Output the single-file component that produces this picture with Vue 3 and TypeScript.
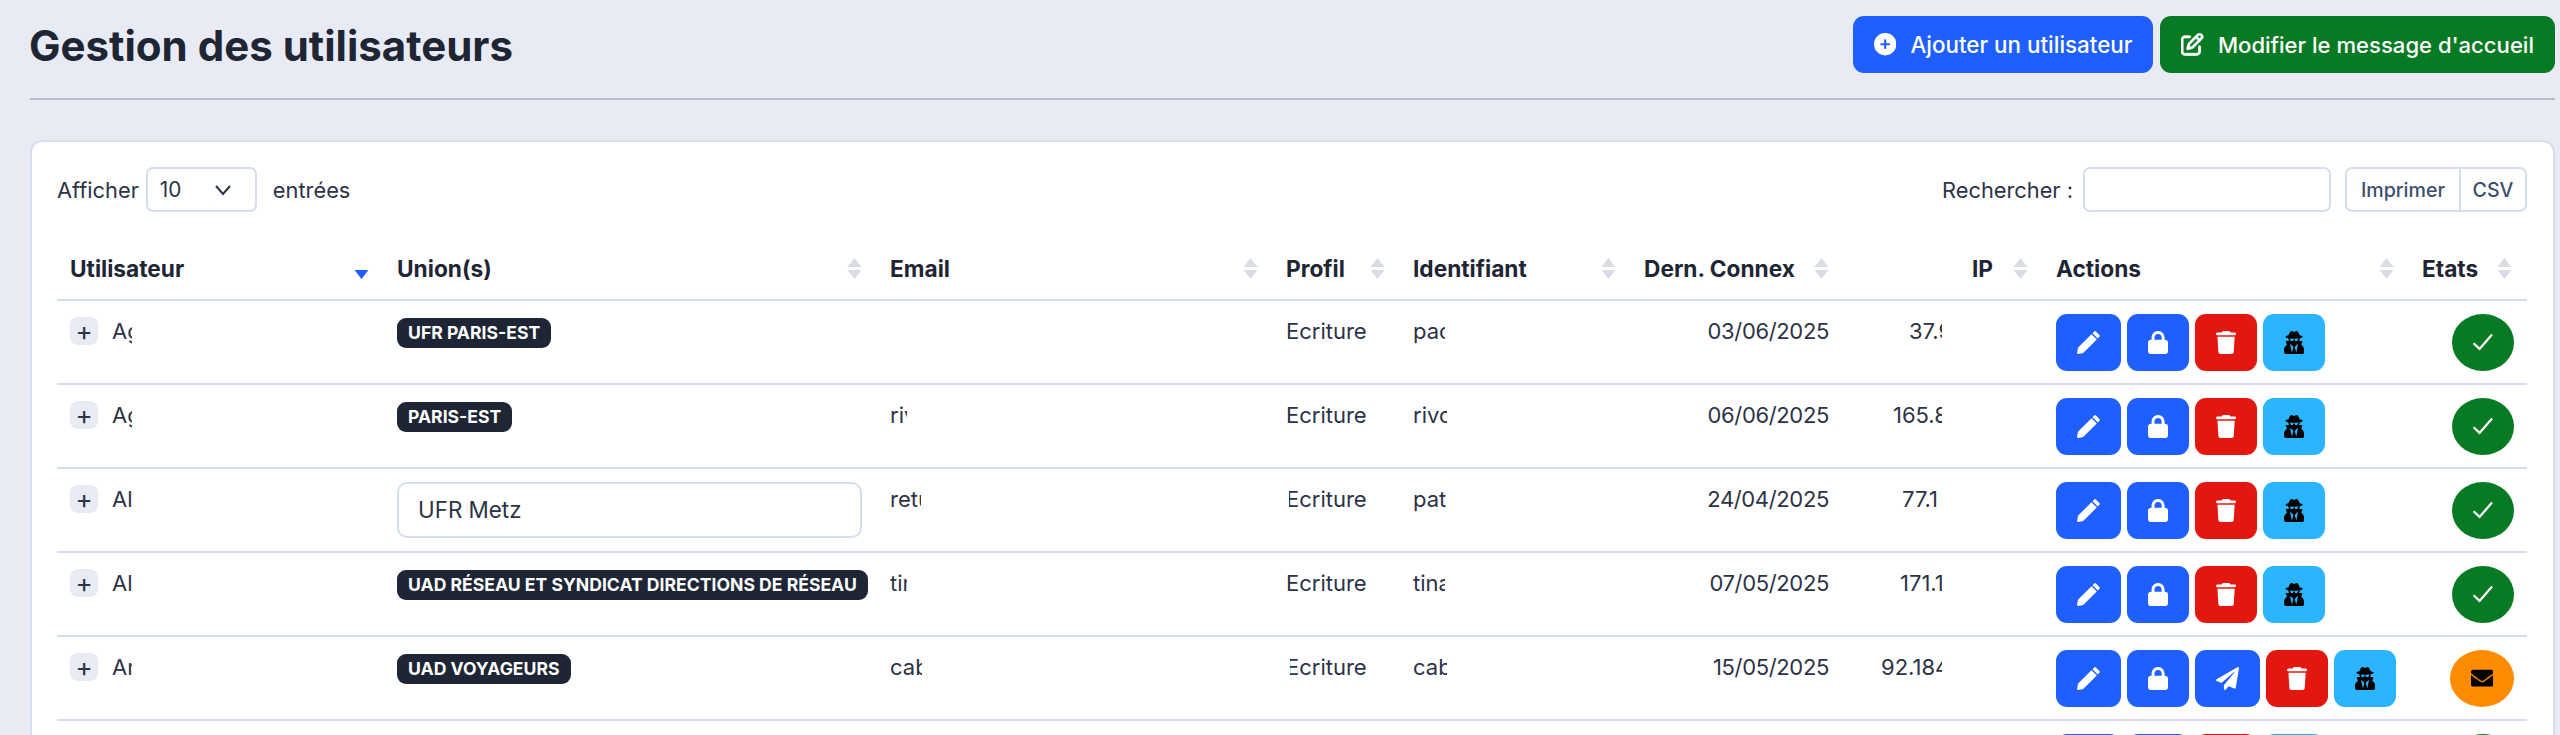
<script setup lang="ts">
interface Row {
  name: string
  union: string
  unionInput?: boolean
  email: string
  emailW: number
  trim?: number
  login: string
  loginW: number
  date: string
  ip: string
  ipW: number
  pending?: boolean
}

const columns = [
  { label: 'Utilisateur', width: 327, active: true },
  { label: 'Union(s)', width: 493 },
  { label: 'Email', width: 396 },
  { label: 'Profil', width: 127 },
  { label: 'Identifiant', width: 231 },
  { label: 'Dern. Connex', width: 213 },
  { label: 'IP', width: 199, end: true },
  { label: 'Actions', width: 366 },
  { label: 'Etats', width: 118 },
]

const rows: Row[] = [
  { name: 'Ag', union: 'UFR PARIS-EST', email: '', emailW: 0, login: 'pac', loginW: 32, date: '03/06/2025', ip: '37.9', ipW: 33 },
  { name: 'Ag', union: 'PARIS-EST', email: 'riv', emailW: 17, login: 'rivc', loginW: 34, date: '06/06/2025', ip: '165.8', ipW: 49 },
  { name: 'Al', union: 'UFR Metz', unionInput: true, email: 'retu', emailW: 31, trim: 3, login: 'pate', loginW: 33, date: '24/04/2025', ip: '77.1', ipW: 40 },
  { name: 'Al', union: 'UAD RÉSEAU ET SYNDICAT DIRECTIONS DE RÉSEAU', email: 'tin', emailW: 17, login: 'tina', loginW: 32, date: '07/05/2025', ip: '171.1', ipW: 42 },
  { name: 'An', union: 'UAD VOYAGEURS', email: 'cab', emailW: 32, trim: 4, login: 'cab', loginW: 34, date: '15/05/2025', ip: '92.184', ipW: 61, pending: true },
  { name: 'An', union: 'UAD VOYAGEURS', email: 'cab', emailW: 32, login: 'cab', loginW: 34, date: '12/05/2025', ip: '92.184', ipW: 61 },
]

const icons: Record<string, { box: string; d: string }> = {
  pencil: { box: '0 0 512 512', d: 'M427 18l67 67c14 14 14 36 0 50l-31 31-117-117 31-31c14-14 36-14 50 0zM323 72l117 117-286 286c-9 9-20 15-32 18l-99 18c-13 2-24-9-22-22l18-99c3-12 9-23 18-32z' },
  lock: { box: '0 0 448 512', d: 'M144 144v48H304V144c0-44.2-35.8-80-80-80s-80 35.8-80 80zM80 192V144C80 64.5 144.5 0 224 0s144 64.5 144 144v48h16c35.3 0 64 28.7 64 64V448c0 35.3-28.7 64-64 64H64c-35.3 0-64-28.7-64-64V256c0-35.3 28.7-64 64-64H80z' },
  plane: { box: '0 0 512 512', d: 'M476 3.2L12.5 270.6c-18.1 10.4-15.8 35.6 2.2 43.2L121 358.4l287.3-253.2c5.5-4.9 13.3 2.6 8.6 8.3L176 407v80.5c0 23.6 28.5 32.9 42.5 15.8L282 426l124.6 52.2c14.2 6 30.4-2.9 33-18.2l72-432C515 7.8 493.3-6.8 476 3.2z' },
  trash: { box: '0 0 448 512', d: 'M135.2 17.7L128 32H32C14.3 32 0 46.3 0 64S14.3 96 32 96H416c17.7 0 32-14.3 32-32s-14.3-32-32-32H320l-7.2-14.3C307.4 6.8 296.3 0 284.2 0H163.8c-12.1 0-23.2 6.8-28.6 17.7zM416 128H32L53.2 467c1.6 25.3 22.6 45 47.9 45H346.9c25.3 0 46.3-19.7 47.9-45L416 128z' },
  secret: { box: '0 0 448 512', d: 'M383.9 308.3l23.9-62.6c4-10.5-3.7-21.7-15-21.7h-58.5c11-18.9 17.8-40.6 17.8-64v-.3c39.2-7.8 64-19.1 64-31.7 0-13.3-27.3-25.1-70.1-33-9.2-32.8-27-65.8-40.6-82.8-9.5-11.9-25.9-15.6-39.5-8.8l-27.6 13.8c-9 4.5-19.6 4.5-28.6 0L182.1 3.4c-13.6-6.8-30-3.1-39.5 8.8-13.5 17-31.4 50-40.6 82.8-42.7 7.9-70 19.7-70 33 0 12.6 24.8 23.9 64 31.7v.3c0 23.4 6.8 45.1 17.8 64H56.3c-11.5 0-19.2 11.7-14.7 22.3l25.8 60.2C27.3 329.8 0 372.7 0 422.4v44.8C0 491.9 20.1 512 44.8 512h358.4c24.7 0 44.8-20.1 44.8-44.8v-44.8c0-48.4-25.8-90.4-64.1-114.1zM176 480l-41.6-192 49.6 32 24 40-32 120zm96 0l-32-120 24-40 49.6-32L272 480zm41.7-298.5c-3.9 11.9-7 24.6-16.5 33.4-10.1 9.3-48 22.4-64-25-2.8-8.4-15.4-8.4-18.3 0-17 50.2-56 32.4-64 25-9.5-8.8-12.7-21.5-16.5-33.4-.8-2.5-6.3-5.7-6.3-5.8v-10.8c28.3 3.6 61 5.8 96 5.8s67.7-2.1 96-5.8v10.8c-.1.1-5.6 3.2-6.4 5.8z' },
  envelope: { box: '0 0 512 512', d: 'M502.3 190.8c3.9-3.1 9.7-.2 9.7 4.7V400c0 26.5-21.5 48-48 48H48c-26.5 0-48-21.5-48-48V195.6c0-5 5.7-7.8 9.7-4.7 22.4 17.4 52.1 39.5 154.1 113.6 21.1 15.4 56.7 47.8 92.2 47.6 35.7.3 72-32.8 92.3-47.6 102-74.1 131.6-96.3 154-113.7zM256 320c23.2.4 56.6-29.2 73.4-41.4 132.7-96.3 142.8-104.7 173.4-128.7 5.8-4.5 9.2-11.5 9.2-18.9v-19c0-26.5-21.5-48-48-48H48C21.5 64 0 85.5 0 112v19c0 7.4 3.4 14.3 9.2 18.9 30.6 23.9 40.7 32.4 173.4 128.7 16.8 12.2 50.2 41.8 73.4 41.4z' },
  plus: { box: '0 0 512 512', d: 'M256 512A256 256 0 1 0 256 0a256 256 0 1 0 0 512zM232 344V280H168c-13.3 0-24-10.7-24-24s10.7-24 24-24h64V168c0-13.3 10.7-24 24-24s24 10.7 24 24v64h64c13.3 0 24 10.7 24 24s-10.7 24-24 24H280v64c0 13.3-10.7 24-24 24s-24-10.7-24-24z' },
  edit: { box: '0 0 512 512', d: 'M441 58.9L453.1 71c9.4 9.4 9.4 24.6 0 33.9L424 134.1 377.9 88 407 58.9c9.4-9.4 24.6-9.4 33.9 0zM209.8 256.2L344 121.9 390.1 168 255.8 302.2c-2.9 2.9-6.5 5-10.4 6.1l-58.5 16.7 16.7-58.5c1.1-3.9 3.2-7.5 6.1-10.4zM373.1 25L175.8 222.2c-8.7 8.7-15 19.4-18.3 31.1l-28.6 100c-2.4 8.4-.1 17.4 6.1 23.6s15.2 8.5 23.6 6.1l100-28.6c11.8-3.4 22.5-9.7 31.1-18.3L487 138.9c28.1-28.1 28.1-73.7 0-101.8L474.9 25C446.8-3.1 401.2-3.1 373.1 25zM88 64C39.4 64 0 103.4 0 152V424c0 48.6 39.4 88 88 88H360c48.6 0 88-39.4 88-88V312c0-13.3-10.7-24-24-24s-24 10.7-24 24V424c0 22.1-17.9 40-40 40H88c-22.1 0-40-17.9-40-40V152c0-22.1 17.9-40 40-40H200c13.3 0 24-10.7 24-24s-10.7-24-24-24H88z' },
}

function actionsFor(row: Row) {
  const list = [
    { icon: 'pencil', tone: 'blue' },
    { icon: 'lock', tone: 'blue' },
  ]
  if (row.pending) list.push({ icon: 'plane', tone: 'blue' })
  list.push({ icon: 'trash', tone: 'red' }, { icon: 'secret', tone: 'cyan' })
  return list
}

function trimStyle(row: Row) {
  return row.trim ? { marginLeft: row.trim + 'px', textIndent: -row.trim + 'px' } : {}
}
</script>

<template>
  <div class="page">
    <header class="top">
      <h1>Gestion des utilisateurs</h1>
      <div class="top-actions">
        <button class="cta blue">
          <svg class="cta-icon" :viewBox="icons.plus.box"><path :d="icons.plus.d" /></svg>
          Ajouter un utilisateur
        </button>
        <button class="cta green">
          <svg class="cta-icon bold" :viewBox="icons.edit.box"><path :d="icons.edit.d" /></svg>
          Modifier le message d'accueil
        </button>
      </div>
    </header>

    <section class="card">
      <div class="toolbar">
        <div class="length">
          <span>Afficher</span>
          <div class="select">
            <span>10</span>
            <svg width="18" height="12" viewBox="0 0 18 12"><polyline points="2,2 9,10 16,2" /></svg>
          </div>
          <span class="after">entrées</span>
        </div>
        <div class="tools">
          <span>Rechercher :</span>
          <input class="search" type="text" />
          <div class="export">
            <button class="print">Imprimer</button>
            <button class="csv">CSV</button>
          </div>
        </div>
      </div>

      <table>
        <colgroup>
          <col v-for="c in columns" :key="c.label" :style="{ width: c.width + 'px' }" />
        </colgroup>
        <thead>
          <tr>
            <th v-for="c in columns" :key="c.label">
              <div class="th-in" :class="{ end: c.end }">
                <span>{{ c.label }}</span>
                <svg class="sort" width="15" height="21" viewBox="0 0 15 21">
                  <path v-if="!c.active" d="M7.5 0 L14.5 9 H0.5 Z" fill="#d9dce5" />
                  <path d="M0.5 12 H14.5 L7.5 21 Z" :fill="c.active ? '#1f5fff' : '#d9dce5'" />
                </svg>
              </div>
            </th>
          </tr>
        </thead>
        <tbody>
          <tr v-for="(row, i) in rows" :key="i">
            <td>
              <div class="user">
                <span class="expand">+</span>
                <span class="clip" style="width: 20px">{{ row.name }}</span>
              </div>
            </td>
            <td>
              <div v-if="row.unionInput" class="union-field">{{ row.union }}</div>
              <span v-else class="badge">{{ row.union }}</span>
            </td>
            <td><span class="clip" :style="{ width: row.emailW + 'px' }">{{ row.email }}</span></td>
            <td><span class="clip" :style="trimStyle(row)">Ecriture</span></td>
            <td><span class="clip" :style="{ width: row.loginW + 'px' }">{{ row.login }}</span></td>
            <td class="date">{{ row.date }}</td>
            <td class="ip"><span class="clip" :style="{ width: row.ipW + 'px' }">{{ row.ip }}</span></td>
            <td class="act">
              <div class="actions">
                <button v-for="a in actionsFor(row)" :key="a.icon" class="act-btn" :class="a.tone">
                  <svg :viewBox="icons[a.icon].box"><path :d="icons[a.icon].d" /></svg>
                </button>
              </div>
            </td>
            <td class="act state">
              <span v-if="row.pending" class="pill orange">
                <svg :viewBox="icons.envelope.box"><path :d="icons.envelope.d" /></svg>
              </span>
              <span v-else class="pill green">
                <svg class="check" viewBox="0 0 448 512"><polyline points="12,280 150,410 436,80" /></svg>
              </span>
            </td>
          </tr>
        </tbody>
      </table>
    </section>
  </div>
</template>

<style>
html, body {
  margin: 0;
  overflow: hidden;
  background: #e8ebf3;
}
</style>

<style scoped>
.page {
  height: 735px;
  overflow: hidden;
  padding: 0 5px 0 30px;
  box-sizing: border-box;
  font-family: Inter, "Liberation Sans", sans-serif;
  color: #2c3346;
  font-size: 22px;
}
.top {
  display: flex;
  justify-content: space-between;
  align-items: center;
  padding: 16px 0 25px;
  border-bottom: 2px solid #b9bdc9;
  margin-bottom: 40px;
}
h1 {
  margin: 2px 0 0 -1px;
  font-size: 42px;
  font-weight: 700;
  color: #1e2534;
  line-height: 55px;
}
.top-actions {
  display: flex;
  gap: 7px;
}
.cta {
  height: 57px;
  display: flex;
  align-items: center;
  gap: 14px;
  padding: 0 21px;
  border: 0;
  border-radius: 11px;
  color: #fff;
  font: 500 22.4px Inter, "Liberation Sans", sans-serif;
}
.cta.green { font-size: 22.1px; }
.cta-icon {
  width: 22.4px;
  height: 22.4px;
  fill: #fff;
}
.cta-icon.bold {
  stroke: #fff;
  stroke-width: 18;
}
.blue { background: #1f5fff; }
.green { background: #087a23; }
.red { background: #e3170f; }
.cyan { background: #2cb5ff; }
.orange { background: #ff8c00; }

.card {
  background: #fff;
  border: 2px solid #d5deec;
  border-radius: 12px;
  padding: 25px 26px 0 25px;
}
.toolbar {
  display: flex;
  justify-content: space-between;
  align-items: center;
  height: 45px;
  margin-bottom: 26px;
  font-size: 21.8px;
}
.length, .tools {
  display: flex;
  align-items: center;
}
.select {
  width: 111px;
  height: 45px;
  margin-left: 7px;
  box-sizing: border-box;
  border: 2px solid #d5deec;
  border-radius: 7px;
  display: flex;
  align-items: center;
  justify-content: space-between;
  padding: 0 23px 0 12px;
  font-size: 20.8px;
}
.select polyline {
  fill: none;
  stroke: #2c3346;
  stroke-width: 2;
}
.after { margin-left: 16px; }
.search {
  width: 248px;
  height: 45px;
  box-sizing: border-box;
  margin: 0 14px 0 10px;
  border: 2px solid #d5deec;
  border-radius: 7px;
  background: #fff;
}
.export {
  display: flex;
  width: 182px;
  height: 45px;
  box-sizing: border-box;
  border: 2px solid #d5deec;
  border-radius: 7px;
}
.export button {
  border: 0;
  background: none;
  padding: 0;
  font: 500 19.6px Inter, "Liberation Sans", sans-serif;
  color: #3e4e6e;
}
.print { width: 112px; }
.export .csv {
  flex: 1;
  border-left: 2px solid #d5deec;
}

table {
  table-layout: fixed;
  width: 2470px;
  border-collapse: separate;
  border-spacing: 0;
}
th {
  height: 62.5px;
  box-sizing: border-box;
  padding: 0 15px 0 13px;
  border-bottom: 2px solid #d5deec;
  text-align: left;
  font-size: 22.7px;
  font-weight: 700;
  color: #1e2534;
}
.th-in {
  display: flex;
  justify-content: space-between;
  align-items: center;
}
.th-in.end {
  justify-content: flex-end;
  gap: 20px;
}
.sort { flex: none; }
td {
  height: 84px;
  box-sizing: border-box;
  padding: 16.5px 13px 0;
  border-bottom: 2px solid #d5deec;
  vertical-align: top;
  line-height: 28px;
}
.user {
  display: flex;
  align-items: center;
  gap: 14px;
}
.expand {
  width: 28px;
  height: 28px;
  flex: none;
  border-radius: 8px;
  background: #e8ebf3;
  display: flex;
  align-items: center;
  justify-content: center;
  font-size: 26px;
  color: #2c3346;
}
.clip {
  display: inline-block;
  overflow: hidden;
  white-space: nowrap;
  vertical-align: top;
}
.badge {
  display: inline-block;
  background: #1e2534;
  color: #fff;
  font-size: 17.6px;
  font-weight: 700;
  line-height: 30px;
  padding: 0 11px;
  border-radius: 9px;
  white-space: nowrap;
}
.union-field {
  margin-top: -3px;
  width: 465px;
  height: 56px;
  box-sizing: border-box;
  border: 2px solid #d5deec;
  border-radius: 10px;
  padding: 0 19px;
  font-size: 22.4px;
  line-height: 52px;
}
.date {
  text-align: right;
  padding-right: 15px;
  letter-spacing: -0.35px;
}
.ip {
  text-align: right;
  padding-right: 101px;
}
.ip .clip { text-align: left; }
.act { padding-top: 13px; }
.actions {
  display: flex;
  gap: 6px;
}
.act-btn {
  height: 57px;
  padding: 0 21px;
  border: 0;
  border-radius: 11px;
  display: flex;
  align-items: center;
}
.act-btn svg {
  height: 23px;
  fill: #fff;
}
.act-btn.cyan svg { fill: #000; }
.state { text-align: right; }
.pill {
  display: inline-flex;
  align-items: center;
  height: 57px;
  padding: 0 21px;
  border-radius: 50%;
}
.pill svg { height: 22.4px; }
.pill.orange svg { fill: #000; }
.check polyline {
  fill: none;
  stroke: #fff;
  stroke-width: 52;
}
</style>
